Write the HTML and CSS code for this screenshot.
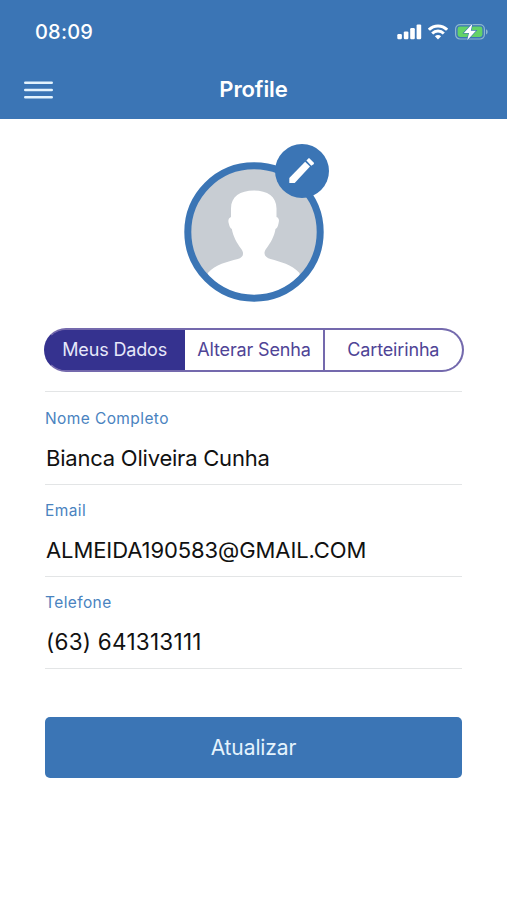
FILE: index.html
```
<!DOCTYPE html>
<html lang="pt-BR">
<head>
    <meta charset="UTF-8">
    <meta name="viewport" content="width=device-width, initial-scale=1.0">
    <title>Profile</title>
    <link rel="stylesheet" href="styles.css">
</head>
<body>
    <header>
        <div class="status-bar">
            <span class="time">08:09</span>
            <div class="status-icons">
                <svg class="signal" width="25" height="16" viewBox="0 0 25 16" fill="#fff">
                    <rect x="0.3" y="10" width="4.6" height="5.2" rx="1.2"/>
                    <rect x="6.8" y="7.4" width="4.6" height="7.8" rx="1.2"/>
                    <rect x="13.2" y="4" width="4.6" height="11.2" rx="1.2"/>
                    <rect x="19.6" y="0.4" width="4.6" height="14.8" rx="1.2"/>
                </svg>
                <svg class="wifi" width="20" height="16" viewBox="0 0 20 16">
                    <g fill="none" stroke="#fff" stroke-width="3">
                        <path d="M0.9 5.8C6 0.6 14 0.6 19.1 5.8"/>
                        <path d="M4.2 9.5c3.3-3.2 8.3-3.2 11.6 0"/>
                    </g>
                    <path d="M6.9 12.2c1.8-1.6 4.4-1.6 6.2 0L10 15.4z" fill="#fff"/>
                </svg>
                <svg class="battery" width="34" height="18" viewBox="0 0 34 18">
                    <rect x="0.6" y="1.6" width="28.8" height="14.4" rx="4.4" fill="none" stroke="#8cb6cf" stroke-width="1.2"/>
                    <path d="M31 6.2c2.2 0.8 2.2 4.400 0 5.200z" fill="#8cb6cf"/>
                    <rect x="2.6" y="3.6" width="24.8" height="10.4" rx="2.4" fill="#63d267"/>
                    <path d="M17.400 0.800L8.800 10h5.200L12.200 17.200 21 7.700h-5.200z" fill="#fff" stroke="#3b75b5" stroke-width="1.200" paint-order="stroke"/>
                </svg>
            </div>
        </div>
        <div class="nav-bar">
            <button class="menu-btn" aria-label="Menu">
                <svg width="29" height="18" viewBox="0 0 29 18" fill="none" stroke="#e4f3fd" stroke-width="2.6" stroke-linecap="round">
                    <path d="M1.300 1.700h26.400M1.300 9h26.400M1.300 16.300h26.400"/>
                </svg>
            </button>
            <h1>Profile</h1>
        </div>
    </header>

    <main>
        <div class="avatar">
            <svg class="photo" width="140" height="140" viewBox="0 0 140 140">
                <clipPath id="photoClip"><circle cx="70" cy="70" r="64"/></clipPath>
                <circle cx="70" cy="70" r="66" fill="#c8cdd3"/>
                <path clip-path="url(#photoClip)" fill="#fff" d="M70 28.5c-14 0-23 6-23 18v8.500c-2.500 1-3.200 3.500-2.200 6.500 0.800 3.500 1.500 4.500 3 5.500 1.200 7 5 14 9.500 20 3.500 5 1.500 8.500-3.500 10-11 3-22 5-30 14L20 140h100l-4.500-29c-8-9-19-11-29-14-5-1.500-8-5-4.500-10 4.500-6 8.500-13 9.500-20 1.500-1 2.300-2 3-5.500 1-3.500 0.500-5.500-2-6.500V46.500c0-12-9-18-22.500-18z"/>
                <circle cx="70" cy="70" r="66.2" fill="none" stroke="#3b75b5" stroke-width="7"/>
            </svg>
            <button class="edit-btn" aria-label="Editar foto">
                <svg width="54" height="54" viewBox="0 0 54 54" fill="#fff">
                    <path d="M14.300 39v-5L30.100 17.700l4.900 4.900L19.700 39z"/>
                    <path d="M31.400 16.500l1.700-1.800c0.500-0.500 1.200-0.500 1.800 0l3.700 3.700c0.500 0.600 0.500 1.200 0 1.800l-2.300 1.600z"/>
                </svg>
            </button>
        </div>

        <div class="tabs">
            <button class="tab active"><span>Meus Dados</span></button>
            <button class="tab"><span>Alterar Senha</span></button>
            <button class="tab"><span>Carteirinha</span></button>
        </div>

        <div class="fields">
            <div class="field">
                <div class="label"><span>Nome Completo</span></div>
                <div class="value"><span>Bianca Oliveira Cunha</span></div>
            </div>
            <div class="field">
                <div class="label"><span>Email</span></div>
                <div class="value email"><span>ALMEIDA190583@GMAIL.COM</span></div>
            </div>
            <div class="field">
                <div class="label"><span>Telefone</span></div>
                <div class="value phone"><span>(63) 641313111</span></div>
            </div>
        </div>

        <button class="update-btn">Atualizar</button>
    </main>
</body>
</html>
```
FILE: styles.css
```
* {
    box-sizing: border-box;
}
body {
    margin: 0;
    min-height: 100vh;
    background-color: #fff;
    font-family: Inter, "Liberation Sans", sans-serif;
    color: #111;
}
button {
    margin: 0;
    padding: 0;
    border: none;
    font-family: inherit;
    cursor: pointer;
}
header {
    height: 119px;
    background-color: #3b75b5;
    color: #fff;
}
.status-bar {
    display: flex;
    justify-content: space-between;
    align-items: center;
    height: 60px;
    padding: 4px 18px 0 35px;
}
.time {
    font-size: 20px;
    font-weight: 500;
    letter-spacing: 0.2px;
}
.status-icons {
    display: flex;
    align-items: center;
}
.wifi {
    margin: 0 7px 0 6px;
}
.nav-bar {
    display: grid;
    grid-template-columns: 29px 1fr 29px;
    align-items: center;
    height: 59px;
    padding: 0 24px;
}
.menu-btn {
    background: none;
}
.menu-btn svg {
    display: block;
}
h1 {
    margin: 0;
    padding-bottom: 2px;
    font-size: 22px;
    font-weight: 600;
    letter-spacing: -0.1px;
    text-align: center;
}
main {
    padding: 43px 44px 0;
}
.avatar {
    position: relative;
    width: 140px;
    height: 140px;
    margin: 0 auto;
}
.photo {
    display: block;
}
.edit-btn {
    position: absolute;
    top: -18px;
    right: -5px;
    width: 54px;
    height: 54px;
    border-radius: 50%;
    background-color: #3b75b5;
}
.edit-btn svg {
    display: block;
}
.tabs {
    display: flex;
    width: 420px;
    height: 44px;
    margin-top: 26px;
    border: 2px solid #7469ad;
    border-left-color: #35328f;
    border-radius: 22px;
    background-color: #35328f;
    overflow: hidden;
}
.tab {
    flex: 1;
    padding-bottom: 2px;
    background-color: #fff;
    color: #4f4496;
    font-size: 18px;
    letter-spacing: -0.15px;
    white-space: nowrap;
}
.tab + .tab {
    border-left: 2px solid #7469ad;
}
.tab.active {
    background-color: #35328f;
    color: #e6e8fa;
}
.tab.active + .tab {
    border-left-color: #35328f;
}
.fields {
    margin: 19px 1px 0;
    border-top: 1px solid #e3e5e6;
}
.field {
    height: 92px;
    padding-top: 16px;
    border-bottom: 1px solid #e3e5e6;
}
.field:first-child {
    height: 93px;
    padding-top: 17px;
}
.label {
    height: 20px;
    line-height: 20px;
    font-size: 15.5px;
    letter-spacing: 0.4px;
    color: #4a83bf;
}
.value {
    height: 28px;
    margin-top: 15px;
    padding-left: 1px;
    line-height: 28px;
    font-size: 22px;
    letter-spacing: -0.22px;
}
.value.email {
    letter-spacing: -0.09px;
}
.value.phone {
    font-size: 22.5px;
    letter-spacing: 0.25px;
}
.update-btn {
    display: block;
    width: 417px;
    height: 61px;
    margin: 48px 1px 0;
    border-radius: 5px;
    background-color: #3b75b5;
    color: #e4f3fd;
    font-size: 21px;
    letter-spacing: -0.1px;
}
```
